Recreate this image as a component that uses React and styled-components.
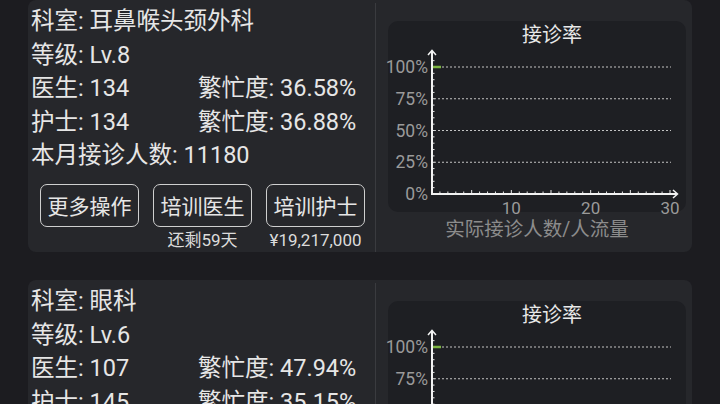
import React from 'react';
import styled, {createGlobalStyle} from 'styled-components';

const GlobalStyle = createGlobalStyle`
    html, body {
        margin: 0;
        padding: 0;
        background: #1c1c20;
        overflow: hidden;
    }
    body {
        font-family: Roboto, "Noto Sans CJK SC", sans-serif;
        color: #e6e6e6;
    }
`;

const Page = styled.div`
    display: flex;
    flex-direction: column;
    gap: 28px;
    padding: 0 28px;
`;

const Card = styled.div`
    display: flex;
    width: 664px;
    height: 252px;
    flex-shrink: 0;
    background: #26272b;
    border-radius: 8px;
`;

const InfoColumn = styled.div`
    width: 347px;
    padding: 5px 0 0 3px;
    box-sizing: border-box;
    display: flex;
    flex-direction: column;
`;

const Line = styled.div`
    font-size: 23.5px;
    line-height: 33.5px;
    white-space: nowrap;
`;

const SplitLine = styled(Line)`
    display: grid;
    grid-template-columns: 167px auto;
`;

const ButtonRow = styled.div`
    display: flex;
    gap: 14px;
    margin: 11px 0 0 9px;
`;

const ActionSlot = styled.div`
    display: flex;
    flex-direction: column;
    align-items: center;
    width: 99px;
`;

const ActionButton = styled.button`
    width: 99px;
    height: 43px;
    padding: 0;
    border: 1.5px solid #cfcfcf;
    border-radius: 7px;
    background: transparent;
    color: #e6e6e6;
    font-family: inherit;
    font-size: 21px;
`;

const Caption = styled.div`
    font-size: 17px;
    line-height: 20px;
    margin-top: 3px;
    color: #dcdcdc;
    white-space: nowrap;
`;

const ChartColumn = styled.div`
    flex: 1;
    margin-top: 3px;
    padding: 18px 6px 0 12px;
    border-left: 1px solid #3a3b3f;
`;

const ChartBox = styled.div`
    width: 298px;
    height: 191px;
    background: #1e1f23;
    border-radius: 10px;
`;

const ChartTitle = styled.div`
    height: 28px;
    line-height: 28px;
    text-align: center;
    font-size: 20px;
    color: #e8e8e8;
    padding-left: 30px;
`;

const ChartSvg = styled.svg`
    display: block;
    overflow: visible;
    font-family: Roboto, "Noto Sans CJK SC", sans-serif;
`;

const AXIS_X = 44;
const AXIS_Y = 145;
const TOP_Y = 18;
const UNIT = (282 - AXIS_X) / 30;

function RateChart() {
    const grid = [0, 1, 2, 3, 4].map(i => ({
        y: TOP_Y + (AXIS_Y - TOP_Y) * i / 4,
        label: `${100 - i * 25}%`,
    }));
    const yTicks = [];
    for (let i = 1; i <= 21; i++) yTicks.push(AXIS_Y - i * (AXIS_Y - TOP_Y) / 20);
    const xTicks = [];
    for (let i = 1; i <= 30; i++) xTicks.push(i);

    return (
        <ChartBox>
            <ChartTitle>接诊率</ChartTitle>
            <ChartSvg width="298" height="190">
                {grid.slice(0, 4).map(g => (
                    <line key={g.label} x1={AXIS_X + 2} x2={283} y1={g.y} y2={g.y}
                          stroke="#c4c4c4" strokeWidth="1" strokeDasharray="2 2"/>
                ))}
                {grid.map(g => (
                    <text key={'t' + g.label} x={40} y={g.y + 6} textAnchor="end"
                          fontSize="17.5" fill="#9a9a9a">{g.label}</text>
                ))}
                {yTicks.map(y => (
                    <line key={'yt' + y} x1={AXIS_X} x2={AXIS_X + 2.5} y1={y} y2={y}
                          stroke="#e8e8e8" strokeWidth="1"/>
                ))}
                {xTicks.map(i => (
                    <line key={'xt' + i} x1={AXIS_X + i * UNIT} x2={AXIS_X + i * UNIT}
                          y1={AXIS_Y} y2={AXIS_Y - (i % 5 === 0 ? 4 : 2.5)}
                          stroke="#e8e8e8" strokeWidth="1"/>
                ))}
                <line x1={AXIS_X} x2={AXIS_X} y1={2} y2={AXIS_Y + 1} stroke="#f2f2f2" strokeWidth="2"/>
                <line x1={AXIS_X - 1} x2={289} y1={AXIS_Y} y2={AXIS_Y} stroke="#f2f2f2" strokeWidth="2"/>
                <polyline points={`${AXIS_X - 4},6 ${AXIS_X},1.5 ${AXIS_X + 4},6`}
                          fill="none" stroke="#f2f2f2" strokeWidth="1.5"/>
                <polyline points={`285,${AXIS_Y - 4} 289.5,${AXIS_Y} 285,${AXIS_Y + 4}`}
                          fill="none" stroke="#f2f2f2" strokeWidth="1.5"/>
                <line x1={AXIS_X + 1} x2={AXIS_X + 9} y1={TOP_Y} y2={TOP_Y}
                      stroke="#7cb342" strokeWidth="2.5"/>
                {[10, 20, 30].map(v => (
                    <text key={'xl' + v} x={AXIS_X + v * UNIT} y={165} textAnchor="middle"
                          fontSize="17" fill="#9a9a9a">{v}</text>
                ))}
                <text x={149} y={187} textAnchor="middle" fontSize="19.5" fill="#8c8c8c">
                    实际接诊人数/人流量
                </text>
            </ChartSvg>
        </ChartBox>
    );
}

function DepartmentCard({dept}) {
    return (
        <Card>
            <InfoColumn>
                <Line>科室: {dept.name}</Line>
                <Line>等级: Lv.{dept.level}</Line>
                <SplitLine>
                    <span>医生: {dept.doctors}</span>
                    <span>繁忙度: {dept.doctorBusy}</span>
                </SplitLine>
                <SplitLine>
                    <span>护士: {dept.nurses}</span>
                    <span>繁忙度: {dept.nurseBusy}</span>
                </SplitLine>
                <Line>本月接诊人数: {dept.patients}</Line>
                <ButtonRow>
                    <ActionSlot>
                        <ActionButton>更多操作</ActionButton>
                    </ActionSlot>
                    <ActionSlot>
                        <ActionButton>培训医生</ActionButton>
                        <Caption>{dept.doctorTraining}</Caption>
                    </ActionSlot>
                    <ActionSlot>
                        <ActionButton>培训护士</ActionButton>
                        <Caption>{dept.nurseTraining}</Caption>
                    </ActionSlot>
                </ButtonRow>
            </InfoColumn>
            <ChartColumn>
                <RateChart/>
            </ChartColumn>
        </Card>
    );
}

const departments = [
    {
        name: '耳鼻喉头颈外科', level: 8, doctors: 134, doctorBusy: '36.58%',
        nurses: 134, nurseBusy: '36.88%', patients: 11180,
        doctorTraining: '还剩59天', nurseTraining: '¥19,217,000',
    },
    {
        name: '眼科', level: 6, doctors: 107, doctorBusy: '47.94%',
        nurses: 145, nurseBusy: '35.15%', patients: 9620,
        doctorTraining: '¥12,480,000', nurseTraining: '¥14,730,000',
    },
];

export default function App() {
    return (
        <>
            <GlobalStyle/>
            <Page>
                {departments.map(d => <DepartmentCard key={d.name} dept={d}/>)}
            </Page>
        </>
    );
}
